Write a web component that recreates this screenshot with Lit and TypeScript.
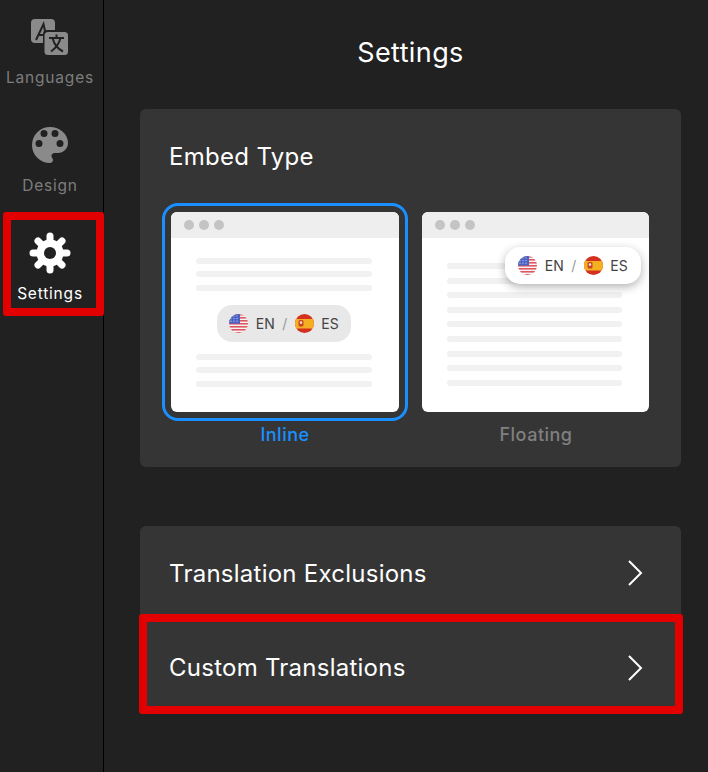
import { LitElement, html, css, svg } from "lit";
import { customElement } from "lit/decorators.js";

// small round flags used inside the language pill
const usFlag = html`<svg class="flag" viewBox="0 0 19 19">
  <defs><clipPath id="us"><circle cx="9.5" cy="9.5" r="9.5"></circle></clipPath></defs>
  <g clip-path="url(#us)">
    <rect width="19" height="19" fill="#f4f4f6"></rect>
    ${[0, 3, 6, 9, 12, 15, 18].map((y) => svg`<rect y=${y} width="19" height="1.6" fill="#e0575f"></rect>`)}
    <rect width="11" height="9.6" fill="#4a62c4"></rect>
    ${[2, 5, 8].map((x) => [2, 4.6, 7.2].map((y) => svg`<circle cx=${x} cy=${y} r=".6" fill="#cfd6f2"></circle>`))}
  </g>
</svg>`;

const esFlag = html`<svg class="flag" viewBox="0 0 19 19">
  <defs><clipPath id="es"><circle cx="9.5" cy="9.5" r="9.5"></circle></clipPath></defs>
  <g clip-path="url(#es)">
    <rect width="19" height="19" fill="#d4301f"></rect>
    <rect y="5" width="19" height="9.5" fill="#f5b021"></rect>
    <rect x="3.5" y="6" width="5" height="6.5" rx="1.5" fill="#c8432c"></rect>
    <circle cx="6" cy="8.6" r="1.3" fill="#f6e3c0"></circle>
  </g>
</svg>`;

const languagesIcon = html`<svg viewBox="0 -5 48 48" width="48" height="48">
  <rect x="5" y="1" width="24" height="24" rx="4" fill="#8a8a8a"></rect>
  <path d="M10 22 L17.5 6 L21 22 M12.5 17 H20" fill="none" stroke="#212121" stroke-width="2"></path>
  <rect x="17" y="12" width="26" height="26" rx="4" fill="#212121"></rect>
  <rect x="18.5" y="14" width="23.5" height="23" rx="3.5" fill="#8a8a8a"></rect>
  <path d="M23 20 H38 M30.5 16.5 V20 M25 33.5 C30 30 33 26 34.5 20 M26.5 20 C28 26 32 31 37 33.5" fill="none" stroke="#212121" stroke-width="2"></path>
</svg>`;

const designIcon = html`<svg viewBox="0 0 48 48" width="48" height="48">
  <path fill="#8a8a8a" fill-rule="evenodd" d="M24 6a18 18 0 0 0 0 36c1.66 0 3-1.34 3-3 0-.78-.3-1.48-.78-2.02-.46-.52-.76-1.22-.76-1.98 0-1.66 1.34-3 3-3H32c5.52 0 10-4.48 10-10C42 13.16 33.94 6 24 6z
    M18 9a3.5 3.5 0 1 0 0 7a3.5 3.5 0 1 0 0-7z M29 9a3.5 3.5 0 1 0 0 7a3.5 3.5 0 1 0 0-7z M13 19a3.5 3.5 0 1 0 0 7a3.5 3.5 0 1 0 0-7z M34 19a3.5 3.5 0 1 0 0 7a3.5 3.5 0 1 0 0-7z"></path>
</svg>`;

const settingsIcon = html`<svg viewBox="0 0 48 48" width="48" height="48">
  <circle cx="24" cy="24" r="13.5" fill="#fff"></circle>
  ${[0, 45, 90, 135].map((a) => svg`<line x1="24" y1="7" x2="24" y2="41" stroke="#fff" stroke-width="7" stroke-linecap="round" transform="rotate(${a} 24 24)"></line>`)}
  <circle cx="24" cy="24" r="6" fill="#212121"></circle>
</svg>`;

const chevron = html`<svg class="chevron" viewBox="0 0 16 28" width="16" height="28">
  <path d="M2 2 L14 14 L2 26" fill="none" stroke="#fff" stroke-width="2"></path>
</svg>`;

const langPill = html`${usFlag}<span>EN</span><span class="slash">/</span>${esFlag}<span>ES</span>`;

@customElement("app-root")
export class AppRoot extends LitElement {
  static styles = css`
    :host {
      display: block;
      font-family: Inter, "Liberation Sans", sans-serif;
      background: #212121;
      color: #fff;
    }
    .page {
      display: flex;
      height: 772px;
      overflow: hidden;
    }
    .sidebar {
      width: 103px;
      flex: none;
      border-right: 1px solid #000;
      display: flex;
      flex-direction: column;
      gap: 8px;
    }
    .nav {
      position: relative;
      height: 100px;
      padding: 13px 3px 0 0;
      box-sizing: border-box;
      display: flex;
      flex-direction: column;
      align-items: center;
      color: #7d7d7d;
      font-size: 15.5px;
      letter-spacing: 0.8px;
    }
    .nav svg {
      display: block;
    }
    .nav span {
      margin-top: 7px;
      line-height: 20px;
    }
    .nav.active {
      color: #fff;
    }
    .mark {
      position: absolute;
      border: 8px solid #e30000;
      border-radius: 3px;
      box-sizing: border-box;
      pointer-events: none;
    }
    .nav .mark {
      left: 3px;
      right: -1px;
      top: -4px;
      bottom: 0;
    }
    .main {
      flex: 1;
      padding: 36px 28px 0 36px;
    }
    h1 {
      margin: 0 0 39px;
      font-size: 27px;
      font-weight: 400;
      letter-spacing: 0.4px;
      line-height: 34px;
      text-align: center;
    }
    .card {
      background: #353535;
      border-radius: 6px;
      padding: 33px 22px 0;
      height: 358px;
      box-sizing: border-box;
    }
    h2 {
      margin: 0 0 31px 7px;
      font-size: 24px;
      font-weight: 400;
      letter-spacing: 0.3px;
      line-height: 30px;
    }
    .options {
      display: flex;
      gap: 5px;
    }
    .option {
      width: 246px;
      display: flex;
      flex-direction: column;
      align-items: center;
      font-size: 18px;
      font-weight: 500;
      letter-spacing: 0.5px;
      color: #808080;
    }
    .option.selected {
      color: #1a8fff;
    }
    .frame {
      border: 3px solid transparent;
      border-radius: 16px;
      padding: 6px;
      margin-bottom: 3px;
    }
    .selected .frame {
      border-color: #1a8fff;
    }
    .window {
      position: relative;
      width: 228px;
      height: 200px;
      background: #fff;
      border-radius: 6px;
      overflow: hidden;
    }
    .floating .window {
      width: 227px;
      margin-right: 1px;
    }
    .titlebar {
      height: 26px;
      background: #eeeeee;
      display: flex;
      align-items: center;
      gap: 5px;
      padding-left: 13px;
    }
    .titlebar i {
      width: 10px;
      height: 10px;
      border-radius: 50%;
      background: #c4c4c4;
    }
    .option label {
      line-height: 22px;
    }
    .lines {
      display: flex;
      flex-direction: column;
      margin: 20px 27px 0 25px;
      gap: 7.4px;
    }
    .lines b {
      display: block;
      height: 6px;
      border-radius: 3px;
      background: #f1f1f1;
    }
    .floating .lines {
      margin-top: 25px;
      gap: 8.6px;
    }
    .pill {
      display: flex;
      align-items: center;
      justify-content: center;
      height: 37px;
      width: 134px;
      border-radius: 15px;
      background: #e8e8e8;
      margin: 14px auto 12px;
      font-size: 14px;
      font-weight: 400;
      letter-spacing: 0;
      color: #444;
      gap: 7.5px;
    }
    .inline-body {
      margin: 20px 27px 0 25px;
    }
    .inline-body .lines {
      margin: 0;
    }
    .pill.float {
      position: absolute;
      left: 83px;
      top: 35px;
      margin: 0;
      width: 136px;
      background: #fff;
      box-shadow: 0 3px 10px rgba(0, 0, 0, 0.3);
    }
    .flag {
      width: 19px;
      height: 19px;
      flex: none;
    }
    .slash {
      color: #999;
    }
    .rows {
      margin-top: 59px;
      background: #353535;
      border-radius: 6px;
    }
    .row {
      position: relative;
      height: 94px;
      box-sizing: border-box;
      display: flex;
      align-items: center;
      justify-content: space-between;
      padding: 0 38px 0 29px;
      font-size: 24px;
      letter-spacing: 0.25px;
    }
    .row + .row {
      border-top: 1px solid #212121;
    }
    .row .mark {
      left: -1px;
      right: -2px;
      top: -7px;
      bottom: 0;
    }
  `;

  render() {
    return html`
      <div class="page">
        <nav class="sidebar">
          <div class="nav">${languagesIcon}<span>Languages</span></div>
          <div class="nav">${designIcon}<span>Design</span></div>
          <div class="nav active">${settingsIcon}<span>Settings</span><div class="mark"></div></div>
        </nav>
        <main class="main">
          <h1>Settings</h1>
          <section class="card">
            <h2>Embed Type</h2>
            <div class="options">
              <div class="option selected">
                <div class="frame">
                  <div class="window">
                    <div class="titlebar"><i></i><i></i><i></i></div>
                    <div class="inline-body">
                      <div class="lines"><b></b><b></b><b></b></div>
                      <div class="pill">${langPill}</div>
                      <div class="lines"><b></b><b></b><b></b></div>
                    </div>
                  </div>
                </div>
                <label>Inline</label>
              </div>
              <div class="option floating">
                <div class="frame">
                  <div class="window">
                    <div class="titlebar"><i></i><i></i><i></i></div>
                    <div class="lines">
                      <b></b><b></b><b></b><b></b><b></b><b></b><b></b><b></b><b></b>
                    </div>
                    <div class="pill float">${langPill}</div>
                  </div>
                </div>
                <label>Floating</label>
              </div>
            </div>
          </section>
          <section class="rows">
            <div class="row"><span>Translation Exclusions</span>${chevron}</div>
            <div class="row"><span>Custom Translations</span>${chevron}<div class="mark"></div></div>
          </section>
        </main>
      </div>
    `;
  }
}
